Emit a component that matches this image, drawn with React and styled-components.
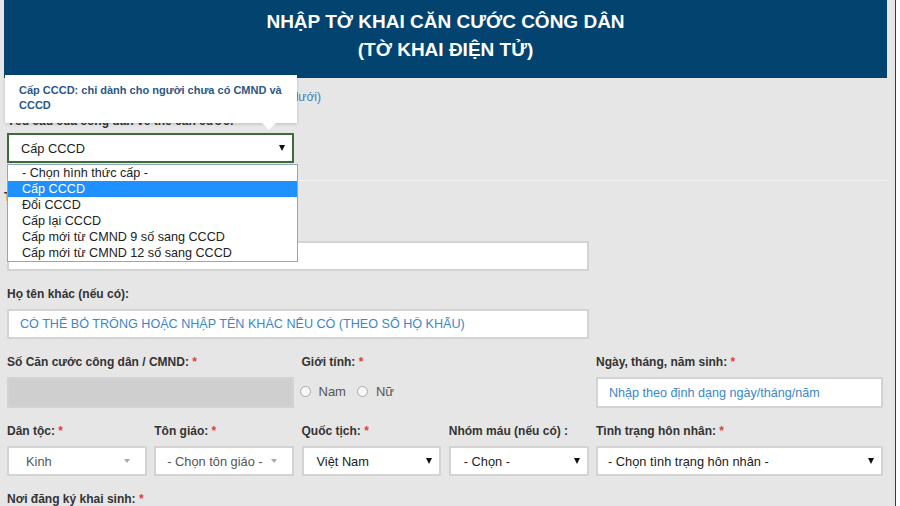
import React from 'react';
import styled, { createGlobalStyle } from 'styled-components';

const GlobalStyle = createGlobalStyle`
  html, body {
    margin: 0;
    padding: 0;
    background: #ffffff;
    font-family: "Liberation Sans", Arial, sans-serif;
  }
`;

const Frame = styled.div`
  width: 896px;
  height: 506px;
  overflow: hidden;
  box-sizing: border-box;
  background: #e6e6e6;
  border-right: 1px solid #3a3a3a;
  padding: 0 8px 0 4px;
`;

const Header = styled.div`
  background: #02446f;
  color: #ffffff;
  text-align: center;
  font-weight: bold;
  font-size: 19px;
  line-height: 28px;
  padding: 8px 0 14px;
`;

const Section = styled.div`
  padding: ${(p) => p.$pad};
  border-bottom: ${(p) => (p.$rule ? '1px solid #f1f1f1' : 'none')};
`;

const Inner = styled.div`
  padding: 0 4px 0 3px;
`;

const GuideLink = styled.div`
  font-size: 12px;
  line-height: 16px;
  color: #3b7fc4;
  margin-bottom: 8px;
`;

const Label = styled.div`
  font-size: 12px;
  line-height: 16px;
  font-weight: bold;
  color: #333333;
  margin-bottom: ${(p) => p.$gap || '7px'};
  white-space: nowrap;
`;

const Req = styled.span`
  color: #e0403a;
`;

const SectionTitle = styled.div`
  font-size: 12px;
  line-height: 16px;
  font-weight: bold;
  color: #333333;
  margin: 0 0 13px -3px;
`;

const SelectWrap = styled.div`
  position: relative;
  width: 287px;
`;

const Select = styled.div`
  box-sizing: border-box;
  height: 30px;
  display: flex;
  align-items: center;
  justify-content: space-between;
  background: #ffffff;
  border: ${(p) => (p.$focused ? '2px solid #3f6b3a' : '2px solid #d3d3d3')};
  padding: 0 7px 0 ${(p) => p.$indent || '12px'};
  font-size: 12.8px;
  color: ${(p) => (p.$muted ? '#555555' : '#222222')};
  white-space: nowrap;
  overflow: hidden;
`;

const Caret = styled.span`
  width: 0;
  height: 0;
  flex: none;
  border-left: 3px solid transparent;
  border-right: 3px solid transparent;
  border-top: ${(p) => (p.$soft ? '4px solid #aaaaaa' : '6px solid #111111')};
  margin-right: ${(p) => (p.$soft ? '8px' : '0')};
`;

const Tooltip = styled.div`
  position: absolute;
  left: -2px;
  bottom: calc(100% + 10px);
  width: 292px;
  box-sizing: border-box;
  padding: 8px 12px 10px 14px;
  background: #ffffff;
  box-shadow: 0 1px 3px rgba(0, 0, 0, 0.18);
  color: #2a5887;
  font-size: 11px;
  font-weight: bold;
  line-height: 15px;
  z-index: 3;

  &::after {
    content: '';
    position: absolute;
    left: 257px;
    top: 100%;
    border-left: 7px solid transparent;
    border-right: 7px solid transparent;
    border-top: 7px solid #ffffff;
  }
`;

const OptionList = styled.ul`
  position: absolute;
  top: calc(100% + 1px);
  left: 0;
  width: 289px;
  margin: 0;
  padding: 0;
  list-style: none;
  background: #ffffff;
  border: 1px solid #8fa6c4;
  z-index: 3;
`;

const Option = styled.li`
  font-size: 12.6px;
  line-height: 16px;
  padding: 0 14px;
  color: ${(p) => (p.$active ? '#ffffff' : '#222222')};
  background: ${(p) => (p.$active ? '#1e90ff' : 'transparent')};
`;

const Grid = styled.div`
  display: grid;
  grid-template-columns: repeat(6, 1fr);
  column-gap: 7.5px;
  row-gap: 15px;
`;

const Field = styled.div`
  grid-column: span ${(p) => p.$span || 1};
  min-width: 0;
`;

const Input = styled.input`
  display: block;
  box-sizing: border-box;
  width: 100%;
  height: ${(p) => p.$h || '30px'};
  margin: 0;
  border: 2px solid #d3d3d3;
  background: ${(p) => (p.$disabled ? '#cfcfcf' : '#ffffff')};
  padding: 0 11px;
  font-family: "Liberation Sans", Arial, sans-serif;
  font-size: 12.6px;
  outline: none;

  &::placeholder {
    color: #3b87c9;
    opacity: 1;
  }
`;

const Radios = styled.div`
  height: 29px;
  display: flex;
  align-items: center;
  gap: 13px;
  font-size: 13px;
  color: #555555;
`;

const RadioItem = styled.label`
  display: flex;
  align-items: center;
  gap: 8px;
`;

const Dot = styled.span`
  width: 9px;
  height: 9px;
  margin-left: -2px;
  border-radius: 50%;
  border: 1px solid #a9a9a9;
  background: #f7f7f7;
`;

const tooltipText = 'Cấp CCCD: chỉ dành cho người chưa có CMND và CCCD';

const options = [
  '- Chọn hình thức cấp -',
  'Cấp CCCD',
  'Đổi CCCD',
  'Cấp lại CCCD',
  'Cấp mới từ CMND 9 số sang CCCD',
  'Cấp mới từ CMND 12 số sang CCCD',
];

function Required({ children }) {
  return (
    <Label>
      {children} <Req>*</Req>
    </Label>
  );
}

function SelectBox({ value, indent, soft, muted }) {
  return (
    <Select $indent={indent} $muted={muted}>
      <span>{value}</span>
      <Caret $soft={soft} />
    </Select>
  );
}

export default function App() {
  return (
    <>
      <GlobalStyle />
      <Frame>
        <Header>
          NHẬP TỜ KHAI CĂN CƯỚC CÔNG DÂN
          <br />
          (TỜ KHAI ĐIỆN TỬ)
        </Header>

        <Section $pad="11px 0 17px" $rule>
          <Inner>
            <GuideLink>Vui lòng xem kỹ hướng dẫn trước khi kê khai (ở phía dưới)</GuideLink>
            <Label $gap="4px">Yêu cầu của công dân về thẻ căn cước:</Label>
            <SelectWrap>
              <Tooltip>{tooltipText}</Tooltip>
              <Select $focused>
                <span>Cấp CCCD</span>
                <Caret />
              </Select>
              <OptionList>
                {options.map((o, i) => (
                  <Option key={o} $active={i === 1}>
                    {o}
                  </Option>
                ))}
              </OptionList>
            </SelectWrap>
          </Inner>
        </Section>

        <Section $pad="8px 0 0">
          <Inner>
            <SectionTitle>THÔNG TIN CÔNG DÂN</SectionTitle>
            <Grid>
              <Field $span={4}>
                <Required>Họ, chữ đệm và tên:</Required>
                <Input />
              </Field>
              <Field $span={2} />

              <Field $span={4}>
                <Label>Họ tên khác (nếu có):</Label>
                <Input placeholder="CÓ THỂ BỎ TRỐNG HOẶC NHẬP TÊN KHÁC NẾU CÓ (THEO SỔ HỘ KHẨU)" />
              </Field>
              <Field $span={2} />

              <Field $span={2}>
                <Required>Số Căn cước công dân / CMND:</Required>
                <Input $disabled $h="31px" disabled />
              </Field>
              <Field $span={2}>
                <Required>Giới tính:</Required>
                <Radios>
                  <RadioItem>
                    <Dot />
                    Nam
                  </RadioItem>
                  <RadioItem>
                    <Dot />
                    Nữ
                  </RadioItem>
                </Radios>
              </Field>
              <Field $span={2}>
                <Required>Ngày, tháng, năm sinh:</Required>
                <Input $h="31px" placeholder="Nhập theo định dạng ngày/tháng/năm" />
              </Field>

              <Field>
                <Required>Dân tộc:</Required>
                <SelectBox value="Kinh" indent="17px" soft muted />
              </Field>
              <Field>
                <Required>Tôn giáo:</Required>
                <SelectBox value="- Chọn tôn giáo -" indent="11px" soft muted />
              </Field>
              <Field>
                <Required>Quốc tịch:</Required>
                <SelectBox value="Việt Nam" indent="13px" />
              </Field>
              <Field>
                <Label>Nhóm máu (nếu có) :</Label>
                <SelectBox value="- Chọn -" indent="13px" />
              </Field>
              <Field $span={2}>
                <Required>Tình trạng hôn nhân:</Required>
                <SelectBox value="- Chọn tình trạng hôn nhân -" indent="10px" />
              </Field>

              <Field $span={6}>
                <Required>Nơi đăng ký khai sinh:</Required>
                <Input />
              </Field>
            </Grid>
          </Inner>
        </Section>
      </Frame>
    </>
  );
}
